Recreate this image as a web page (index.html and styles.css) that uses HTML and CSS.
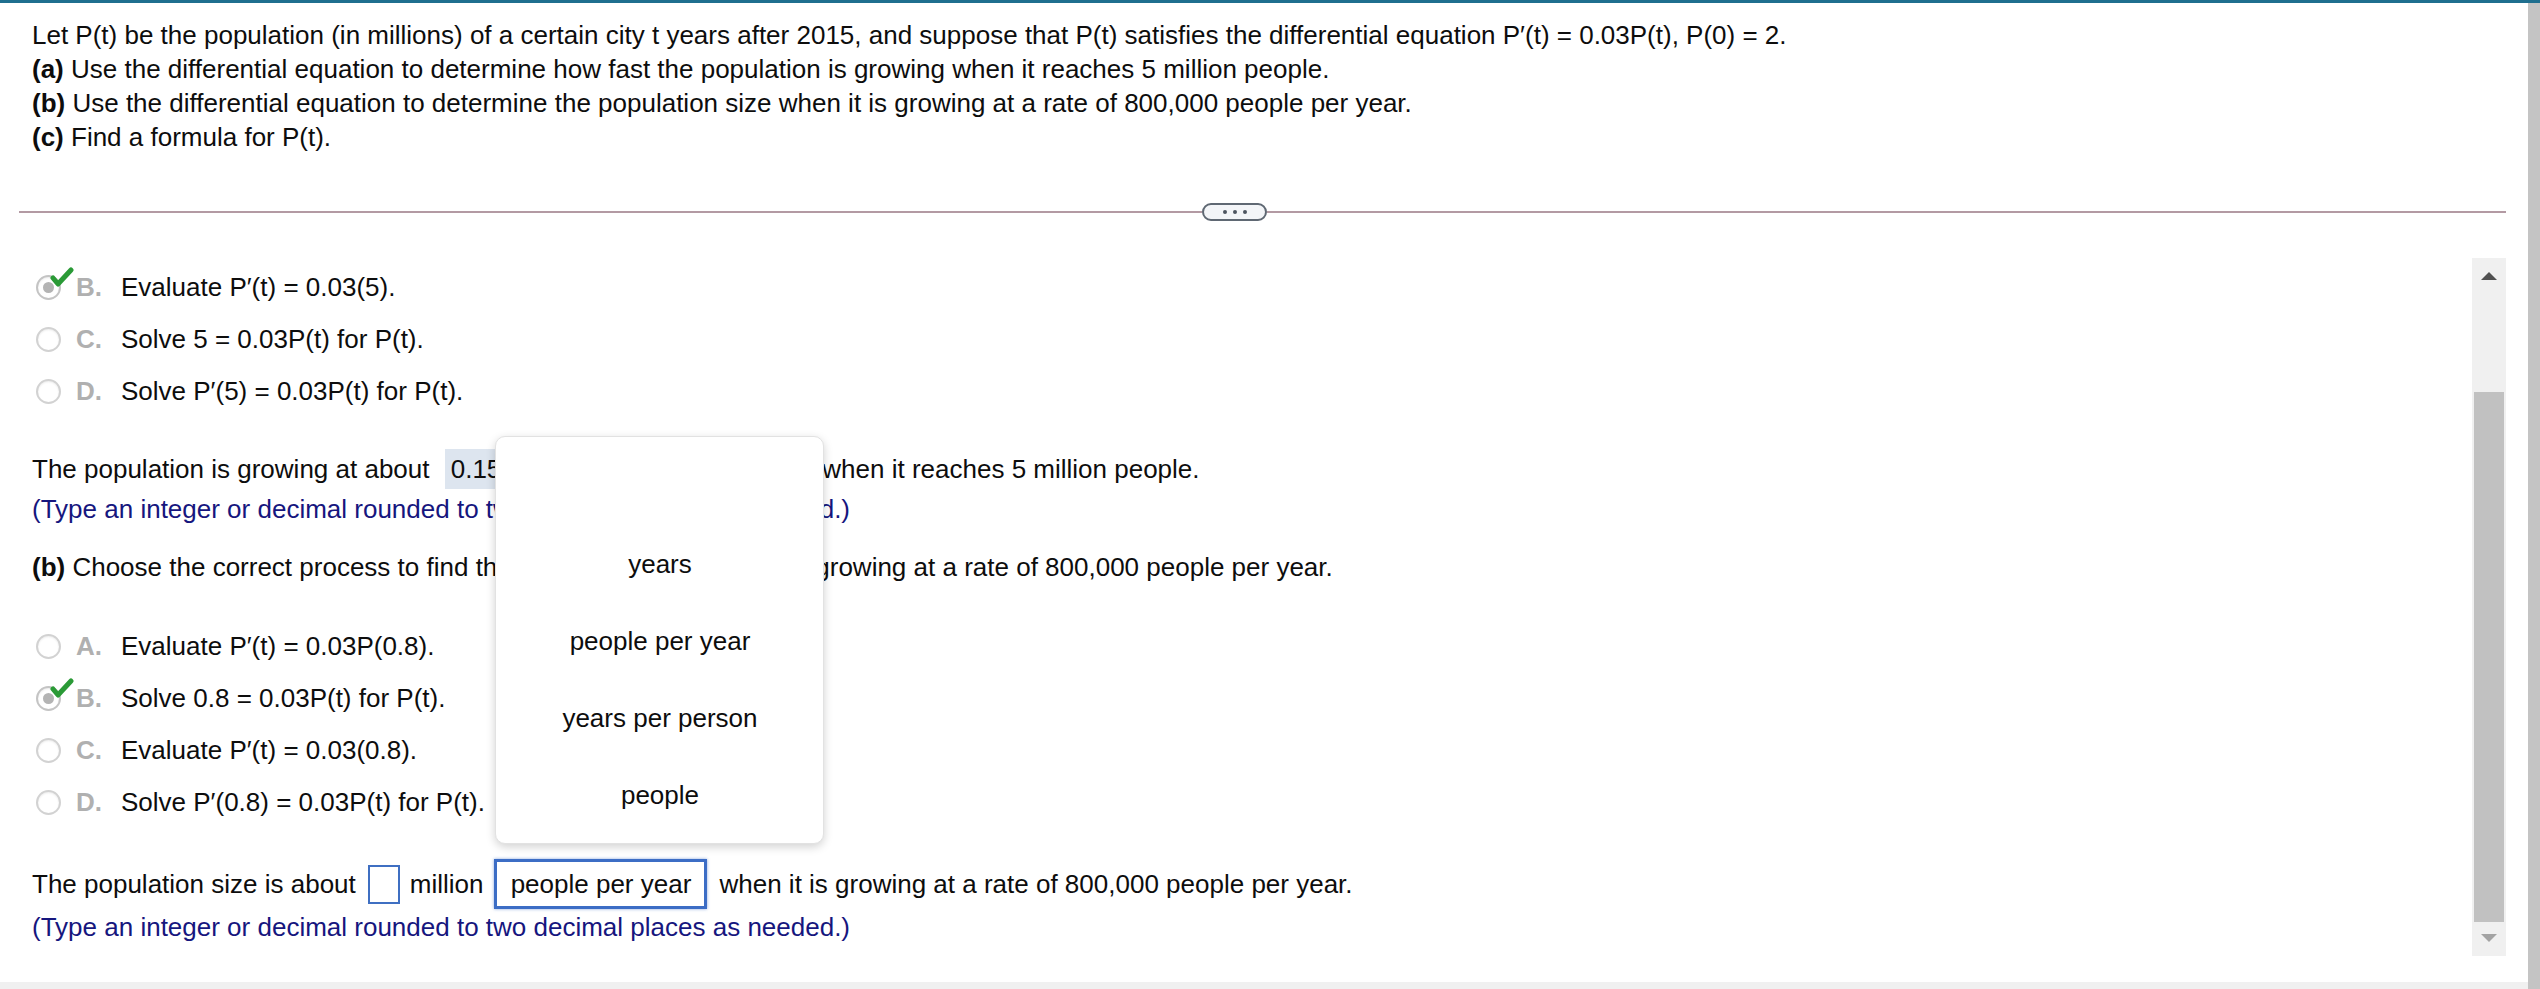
FILE: index.html
```html
<!DOCTYPE html>
<html>
<head>
<meta charset="utf-8">
<link rel="stylesheet" href="styles.css">
</head>
<body>
<div class="topbar"></div>
<div class="page">
  <div class="main">
    <div class="question">
      <div>Let P(t) be the population (in millions) of a certain city t years after 2015, and suppose that P(t) satisfies the differential equation P′(t) = 0.03P(t), P(0) = 2.</div>
      <div><b>(a)</b> Use the differential equation to determine how fast the population is growing when it reaches 5 million people.</div>
      <div><b>(b)</b> Use the differential equation to determine the population size when it is growing at a rate of 800,000 people per year.</div>
      <div><b>(c)</b> Find a formula for P(t).</div>
    </div>
    <div class="divider">
      <div class="rule rule-left"></div>
      <div class="pill"><span></span><span></span><span></span></div>
      <div class="rule"></div>
    </div>
    <div class="pane">
      <div class="content">
        <div class="opts opts1">
          <div class="opt"><span class="radio checked"><svg class="check" viewBox="0 0 24 24" width="24" height="24"><path d="M3 11 L8 17 L21 3" fill="none" stroke="#2a9a36" stroke-width="5" stroke-linecap="round" stroke-linejoin="round"/></svg></span><span class="letter">B.</span><span>Evaluate P′(t) = 0.03(5).</span></div>
          <div class="opt"><span class="radio"></span><span class="letter">C.</span><span>Solve 5 = 0.03P(t) for P(t).</span></div>
          <div class="opt"><span class="radio"></span><span class="letter">D.</span><span>Solve P′(5) = 0.03P(t) for P(t).</span></div>
        </div>
        <div class="ansrow">The population is growing at about <span class="filled">0.15</span><span class="hidden-sel">million people per year</span>when it reaches 5 million people.</div>
        <div class="note">(Type an integer or decimal rounded to two decimal places as needed.)</div>
        <div class="partb"><b>(b)</b> Choose the correct process to find the population size when it is growing at a rate of 800,000 people per year.</div>
        <div class="opts opts2">
          <div class="opt"><span class="radio"></span><span class="letter">A.</span><span>Evaluate P′(t) = 0.03P(0.8).</span></div>
          <div class="opt"><span class="radio checked"><svg class="check" viewBox="0 0 24 24" width="24" height="24"><path d="M3 11 L8 17 L21 3" fill="none" stroke="#2a9a36" stroke-width="5" stroke-linecap="round" stroke-linejoin="round"/></svg></span><span class="letter">B.</span><span>Solve 0.8 = 0.03P(t) for P(t).</span></div>
          <div class="opt"><span class="radio"></span><span class="letter">C.</span><span>Evaluate P′(t) = 0.03(0.8).</span></div>
          <div class="opt"><span class="radio"></span><span class="letter">D.</span><span>Solve P′(0.8) = 0.03P(t) for P(t).</span></div>
        </div>
        <div class="finalrow">
          <span>The population size is about</span>
          <span class="box"></span>
          <span>million</span>
          <span class="selwrap">
            <span class="select">people per year</span>
            <div class="popup">
              <div class="item"></div>
              <div class="item">years</div>
              <div class="item">people per year</div>
              <div class="item">years per person</div>
              <div class="item">people</div>
            </div>
          </span>
          <span>when it is growing at a rate of 800,000 people per year.</span>
        </div>
        <div class="note note2">(Type an integer or decimal rounded to two decimal places as needed.)</div>
      </div>
      <div class="vscroll">
        <div class="arrow up"></div>
        <div class="thumb"></div>
        <div class="arrow down"></div>
      </div>
    </div>
    <div class="footer"></div>
  </div>
  <div class="outer"></div>
</div>
</body>
</html>
```

FILE: styles.css
```css
html, body {
  margin: 0;
  padding: 0;
  background: #fff;
}
body {
  font-family: "Liberation Sans", Arial, sans-serif;
  font-size: 26px;
  color: #0d0d0d;
  width: 2540px;
  height: 989px;
  overflow: hidden;
}
.topbar {
  height: 3px;
  background: #1f6f8f;
}
.page {
  display: flex;
  height: 986px;
}
.main {
  flex: 1;
  display: flex;
  flex-direction: column;
}
.outer {
  width: 12px;
  background: #c4c4c4;
}
.question {
  padding: 15px 32px 0;
  line-height: 34px;
}
.divider {
  margin: 49px 22px 0 19px;
  height: 18px;
  display: flex;
  align-items: center;
}
.rule {
  flex: 1;
  height: 2px;
  background: #b39aa3;
}
.rule-left {
  flex: none;
  width: 1183px;
}
.pill {
  width: 61px;
  height: 14px;
  border: 2px solid #5f6873;
  border-radius: 10px;
  background: #f3f5f8;
  display: flex;
  align-items: center;
  justify-content: center;
  gap: 6px;
}
.pill span {
  width: 4px;
  height: 4px;
  border-radius: 50%;
  background: #4d5560;
}
.pane {
  flex: 1;
  display: flex;
}
.content {
  flex: 1;
  padding-left: 32px;
}
.opts1 {
  margin-top: 40px;
}
.opt {
  height: 52px;
  display: flex;
  align-items: center;
}
.radio {
  position: relative;
  box-sizing: border-box;
  width: 25px;
  height: 25px;
  margin-left: 4px;
  border: 2px solid #d2d2d2;
  border-radius: 50%;
  background: #fff;
  box-shadow: inset 0 1px 2px rgba(0,0,0,0.08);
}
.radio.checked {
  border-color: #c4c4c4;
}
.radio.checked::before {
  content: "";
  position: absolute;
  left: 5px;
  top: 5px;
  width: 11px;
  height: 11px;
  border-radius: 50%;
  background: #b4b4b4;
}
.check {
  position: absolute;
  left: 12px;
  top: -10px;
}
.letter {
  width: 45px;
  margin-left: 15px;
  font-weight: bold;
  color: #b0b0b0;
}
.ansrow {
  margin-top: 32px;
  height: 40px;
  line-height: 40px;
  white-space: nowrap;
}
.filled {
  display: inline-block;
  background: #dde5ef;
  padding: 0 6px;
  margin-left: 8px;
}
.hidden-sel {
  display: inline-block;
  width: 315px;
  color: transparent;
}
.note {
  margin-top: 3px;
  line-height: 34px;
  color: #16167e;
}
.partb {
  margin-top: 24px;
  line-height: 34px;
}
.opts2 {
  margin-top: 36px;
}
.finalrow {
  margin-top: 31px;
  height: 50px;
  display: flex;
  align-items: center;
  gap: 10px;
  white-space: nowrap;
}
.box {
  box-sizing: border-box;
  width: 32px;
  height: 39px;
  margin-left: 2px;
  border: 2px solid #3f6fc2;
}
.selwrap {
  position: relative;
  display: flex;
  margin-left: 1px;
  margin-right: 2px;
}
.select {
  box-sizing: border-box;
  height: 50px;
  width: 213px;
  border: 3px solid #3c6dc5;
  box-shadow: 0 0 3px rgba(60,109,197,0.6);
  display: flex;
  align-items: center;
  justify-content: center;
}
.popup {
  position: absolute;
  left: 1px;
  bottom: 65px;
  width: 329px;
  height: 408px;
  box-sizing: border-box;
  padding-top: 12px;
  background: #fff;
  border: 1px solid #e2e2e2;
  border-radius: 10px;
  box-shadow: 0 3px 10px rgba(0,0,0,0.18);
}
.item {
  height: 77px;
  display: flex;
  align-items: center;
  justify-content: center;
}
.note2 {
  margin-top: 1px;
}
.vscroll {
  margin: 37px 22px 0 0;
  width: 34px;
  height: 698px;
  background: #f0f0f0;
  display: flex;
  flex-direction: column;
  align-items: center;
}
.arrow {
  width: 0;
  height: 0;
  border-left: 8px solid transparent;
  border-right: 8px solid transparent;
}
.arrow.up {
  margin-top: 14px;
  border-bottom: 8px solid #505050;
}
.thumb {
  margin-top: 112px;
  width: 30px;
  height: 530px;
  background: #c1c1c1;
}
.arrow.down {
  margin-top: 12px;
  border-top: 8px solid #a3a3a3;
}
.footer {
  height: 7px;
  background: #f0f0f0;
}
```
